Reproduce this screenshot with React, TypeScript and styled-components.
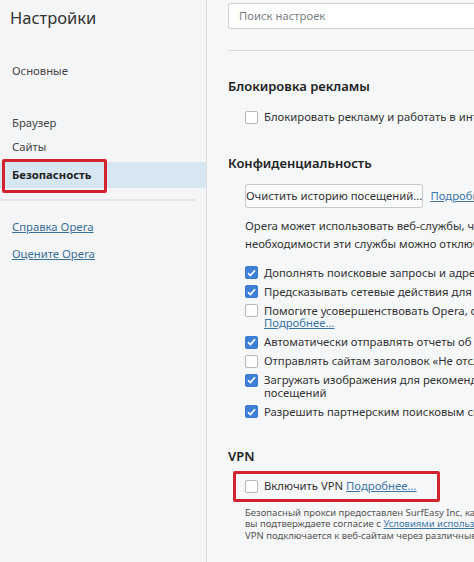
import React from "react";
import styled, { createGlobalStyle } from "styled-components";

const Global = createGlobalStyle`
  html, body { margin: 0; padding: 0; }
  body {
    width: 474px;
    height: 562px;
    overflow: hidden;
    background: #f6f7f9;
    font-family: "Noto Sans", "Open Sans", sans-serif;
    color: #333;
  }
`;

const Page = styled.div`
  display: flex;
  width: 474px;
  height: 562px;
  overflow: hidden;
`;

const Sidebar = styled.aside`
  flex: 0 0 206px;
  border-right: 1px solid #dcdee2;
  background: #f4f5f7;
  display: flex;
  flex-direction: column;
`;

const Title = styled.h1`
  margin: 6px 0 0 10px;
  font-size: 16.5px;
  line-height: 24px;
  font-weight: 400;
  color: #333;
`;

const NavGroup = styled.nav<{ $top: number }>`
  display: flex;
  flex-direction: column;
  margin-top: ${(p) => p.$top}px;
`;

const NavItem = styled.div<{ $active?: boolean }>`
  position: relative;
  height: ${(p) => (p.$active ? 26 : 24)}px;
  margin-top: ${(p) => (p.$active ? 3 : 0)}px;
  line-height: ${(p) => (p.$active ? 26 : 24)}px;
  padding-left: 12px;
  font-size: 11.3px;
  font-weight: ${(p) => (p.$active ? 700 : 400)};
  color: ${(p) => (p.$active ? "#222" : "#444")};
  background: ${(p) => (p.$active ? "#d6e7f1" : "transparent")};
`;

const Annotation = styled.span`
  position: absolute;
  left: 2px;
  top: -3px;
  width: 99px;
  height: 28px;
  border: 3px solid #d3232f;
  border-radius: 2px;
  pointer-events: none;
`;

const SideRule = styled.hr`
  margin: 11px 11px 0 0;
  border: 0;
  border-top: 2px solid #e1e3e6;
`;

const SideLinks = styled.div`
  display: flex;
  flex-direction: column;
  gap: 9px;
  margin-top: 17px;
  padding-left: 12px;
`;

const SideLink = styled.a`
  font-size: 11.3px;
  line-height: 18px;
  color: #3a6f98;
  text-decoration: underline;
`;

const Main = styled.main`
  flex: 1;
  min-width: 0;
  overflow: hidden;
  padding-left: 21px;
  white-space: nowrap;
`;

const Search = styled.div`
  margin-top: 3px;
  height: 24px;
  border: 1px solid #cfd2d6;
  border-right: 0;
  border-radius: 3px 0 0 3px;
  background: #fff;
  padding-left: 10px;
  font-size: 11.3px;
  line-height: 24px;
  color: #7d7f83;
`;

const TopRule = styled.hr`
  margin: 21px 0 0 0;
  border: 0;
  border-top: 1px solid #d7d9dc;
`;

const Heading = styled.h2<{ $top: number }>`
  margin: ${(p) => p.$top}px 0 0 0;
  font-size: 13px;
  line-height: 18px;
  font-weight: 600;
  color: #222;
`;

const Block = styled.div<{ $top: number }>`
  margin-top: ${(p) => p.$top}px;
  padding-left: 17px;
`;

const CheckList = styled.div`
  display: flex;
  flex-direction: column;
  gap: 6.5px;
`;

const Row = styled.label`
  display: flex;
  align-items: flex-start;
  gap: 6px;
  font-size: 11.3px;
  line-height: 12.5px;
  color: #333;
`;

const Box = styled.span<{ $on?: boolean }>`
  flex: 0 0 auto;
  box-sizing: border-box;
  width: 13px;
  height: 13px;
  margin-top: -0.5px;
  border-radius: 2px;
  border: 1px solid ${(p) => (p.$on ? "#3a7ad3" : "#b4b7bb")};
  background: ${(p) => (p.$on ? "#3e80d6" : "#fff")};
  display: flex;
  align-items: center;
  justify-content: center;
`;

const Label = styled.span`
  display: flex;
  flex-direction: column;
`;

const Link = styled.a`
  color: #3a76a8;
  text-decoration: underline;
`;

const ButtonRow = styled.div`
  display: flex;
  align-items: center;
  gap: 7px;
  font-size: 11.3px;
`;

const Button = styled.button`
  box-sizing: border-box;
  width: 194px;
  height: 24px;
  border: 1px solid #c5c8cc;
  border-radius: 3px;
  background: #f9fafb;
  font-family: inherit;
  font-size: 11.3px;
  color: #333;
  padding: 0;
`;

const Para = styled.p`
  margin: 9px 0 14px 0;
  font-size: 11.3px;
  line-height: 18px;
  color: #333;
`;

const VpnRow = styled.div`
  position: relative;
  padding: 9px 0 8px 0;
`;

const VpnMark = styled.span`
  position: absolute;
  left: -12px;
  top: 0;
  width: 201px;
  height: 25px;
  border: 3px solid #d3232f;
  border-radius: 2px;
  pointer-events: none;
`;

const Fine = styled.p`
  margin: 6px 0 0 0;
  font-size: 9.5px;
  line-height: 11.5px;
  color: #555;
`;

const Check = ({ on }: { on?: boolean }) => (
  <Box $on={on}>
    {on && (
      <svg width="9" height="8" viewBox="0 0 9 8">
        <path d="M1 4.2 L3.4 6.5 L8 1.2" fill="none" stroke="#fff" strokeWidth="1.7" />
      </svg>
    )}
  </Box>
);

export default function App() {
  return (
    <>
      <Global />
      <Page>
        <Sidebar>
          <Title>Настройки</Title>
          <NavGroup $top={29}>
            <NavItem>Основные</NavItem>
          </NavGroup>
          <NavGroup $top={28}>
            <NavItem>Браузер</NavItem>
            <NavItem>Сайты</NavItem>
            <NavItem $active>
              Безопасность
              <Annotation />
            </NavItem>
          </NavGroup>
          <SideRule />
          <SideLinks>
            <SideLink>Справка Opera</SideLink>
            <SideLink>Оцените Opera</SideLink>
          </SideLinks>
        </Sidebar>
        <Main>
          <Search>Поиск настроек</Search>
          <TopRule />
          <Heading $top={26}>Блокировка рекламы</Heading>
          <Block $top={16}>
            <Row>
              <Check />
              <Label>Блокировать рекламу и работать в интернете в три раза быстрее</Label>
            </Row>
          </Block>
          <Heading $top={30}>Конфиденциальность</Heading>
          <Block $top={12}>
            <ButtonRow>
              <Button>Очистить историю посещений...</Button>
              <Link>Подробнее...</Link>
            </ButtonRow>
            <Para>
              Opera может использовать веб-службы, чтобы сделать работу в браузере удобнее. При
              <br />
              необходимости эти службы можно отключить.
            </Para>
            <CheckList>
              <Row>
                <Check on />
                <Label>Дополнять поисковые запросы и адреса с помощью сервиса подсказок</Label>
              </Row>
              <Row>
                <Check on />
                <Label>Предсказывать сетевые действия для ускорения загрузки страниц</Label>
              </Row>
              <Row>
                <Check />
                <Label>
                  <span>Помогите усовершенствовать Opera, отправляя информацию об использовании</span>
                  <Link>Подробнее...</Link>
                </Label>
              </Row>
              <Row>
                <Check on />
                <Label>Автоматически отправлять отчеты об аварийном завершении в Opera</Label>
              </Row>
              <Row>
                <Check />
                <Label>Отправлять сайтам заголовок «Не отслеживать»</Label>
              </Row>
              <Row>
                <Check on />
                <Label>
                  <span>Загружать изображения для рекомендуемых источников на Экспресс-панели на основе истории</span>
                  <span>посещений</span>
                </Label>
              </Row>
              <Row>
                <Check on />
                <Label>Разрешить партнерским поисковым системам проверять факт установки Opera</Label>
              </Row>
            </CheckList>
          </Block>
          <Heading $top={29}>VPN</Heading>
          <Block $top={6}>
            <VpnRow>
              <VpnMark />
              <Row>
                <Check />
                <Label>
                  <span>
                    Включить VPN <Link>Подробнее...</Link>
                  </span>
                </Label>
              </Row>
            </VpnRow>
            <Fine>
              Безопасный прокси предоставлен SurfEasy Inc, канадской компанией. Используя VPN,
              <br />
              вы подтверждаете согласие с <Link>Условиями использования</Link>.
              <br />
              VPN подключается к веб-сайтам через различные серверы по всему миру.
            </Fine>
          </Block>
        </Main>
      </Page>
    </>
  );
}
